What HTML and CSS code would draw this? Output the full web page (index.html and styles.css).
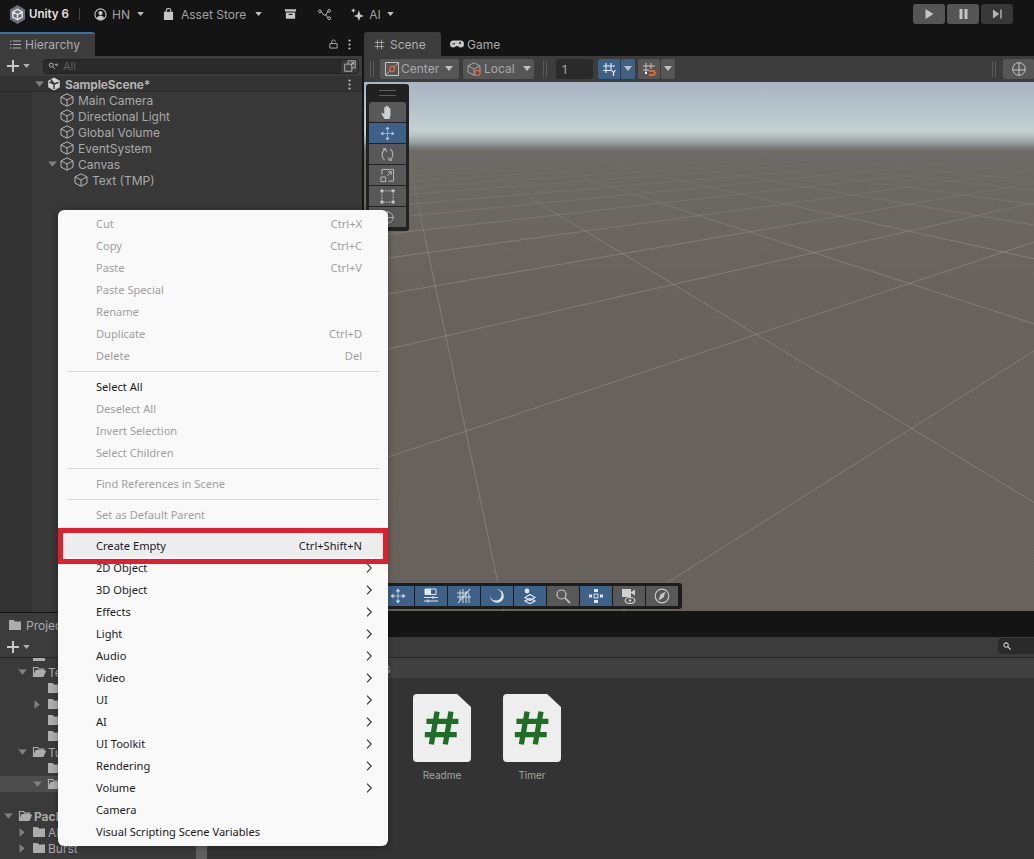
FILE: index.html
```html
<!DOCTYPE html>
<html lang="en">
<head>
<meta charset="utf-8">
<title>Unity 6</title>
<link rel="stylesheet" href="styles.css">
</head>
<body>
<svg class="defs" width="0" height="0" aria-hidden="true">
  <symbol id="cube" viewBox="0 0 14 14"><path d="M7 .8 13 3.900v6.200L7 13.200 1 10.100V3.900Z M1 3.900 7 7l6-3.100 M7 7v6.200" fill="none" stroke="currentColor" stroke-width="1"/></symbol>
  <symbol id="fold" viewBox="0 0 14 12"><path d="M1 1h4.500l1.500 1.600h6V11H1Z" fill="currentColor"/></symbol>
  <symbol id="open" viewBox="0 0 14 12"><path d="M1.500 10.500V1.500h4l1.400 1.600h4.600v1.400H4L1.500 10.500h9.500L13.500 5H4" fill="none" stroke="currentColor" stroke-width="1.200"/><path d="M4 5h9.500L11 10.500H1.500Z" fill="currentColor"/></symbol>
  <symbol id="down" viewBox="0 0 10 6"><path d="M0 0h10L5 6Z" fill="currentColor"/></symbol>
  <symbol id="side" viewBox="0 0 6 10"><path d="M0 0v10l6-5Z" fill="currentColor"/></symbol>
  <symbol id="chev" viewBox="0 0 6 10"><path d="M1 .7 5.200 5 1 9.300" fill="none" stroke="currentColor" stroke-width="1.100"/></symbol>
  <symbol id="move" viewBox="0 0 18 18"><path d="M9 3v12M3 9h12" stroke="currentColor" stroke-width=".8" fill="none"/><path d="M9 .5 11.500 4h-5ZM9 17.500 6.500 14h5ZM.5 9 4 6.500v5ZM17.500 9 14 11.500v-5Z" fill="currentColor"/></symbol>
  <symbol id="hash" viewBox="0 0 44 46"><path d="M16 3 9 43M33 3 26 43M3 15h39M1 31h39" fill="none" stroke="currentColor" stroke-width="6.500"/></symbol>
  <symbol id="grid" viewBox="0 0 16 16"><path d="M5 1v14M11 1v14M1 5h14M1 11h14" fill="none" stroke="currentColor" stroke-width="1.200"/></symbol>
</svg>

<div class="app">
  <header class="topbar">
    <div class="brand">
      <svg class="logo" viewBox="0 0 18 20"><path d="M9 0 17 4.800v10.400L9 20 1 15.200V4.800Z" fill="#6b6f78"/><path d="M9 4.500 14 7.300v5.500L9 15.600 4 12.800V7.300Z M4 7.300 9 10l5-2.700M9 10v5.500" fill="none" stroke="#e4e4e4" stroke-width="1.500"/></svg>
      <span class="brand-name">Unity 6</span>
    </div>
    <span class="top-sep"></span>
    <div class="top-item account">
      <svg class="top-ic" viewBox="0 0 14 14"><circle cx="7" cy="7" r="6" fill="none" stroke="currentColor" stroke-width="1.200"/><circle cx="7" cy="5.500" r="2.300" fill="currentColor"/><path d="M3 11c.8-2 2.200-2.600 4-2.600s3.200.6 4 2.600a6 6 0 0 1-8 0Z" fill="currentColor"/></svg>
      <span>HN</span>
      <svg class="caret" viewBox="0 0 10 6"><use href="#down"/></svg>
    </div>
    <div class="top-item store">
      <svg class="top-ic" viewBox="0 0 12 14"><path d="M1 4h10v9H1Z" fill="currentColor"/><path d="M3.500 5V2.500a2.500 2 0 0 1 5 0V5" fill="none" stroke="currentColor" stroke-width="1.100"/></svg>
      <span>Asset Store</span>
      <svg class="caret" viewBox="0 0 10 6"><use href="#down"/></svg>
    </div>
    <svg class="top-ic archive" viewBox="0 0 14 12"><path d="M1 1h12v2.200H1ZM2 4.500h10V11H2Z" fill="currentColor"/><path d="M5 6.500h4" stroke="#141414" stroke-width="1.200"/></svg>
    <svg class="top-ic graph" viewBox="0 0 14 12"><circle cx="2" cy="2.500" r="1.500" fill="none" stroke="currentColor"/><circle cx="12" cy="2" r="1.500" fill="none" stroke="currentColor"/><circle cx="12" cy="10" r="1.500" fill="none" stroke="currentColor"/><path d="M3.500 3 6 6.500h2.500L10.500 2.500M8.500 6.500l2 3" fill="none" stroke="currentColor"/></svg>
    <div class="top-item ai">
      <svg class="top-ic" viewBox="0 0 14 14"><path d="M8.500 2.500 10 7l4 1.500L10 10l-1.500 4L7 10 3 8.500 7 7Z" fill="currentColor"/><path d="M2.500 0 3.300 2 5 2.700 3.300 3.500 2.500 5.500 1.700 3.500 0 2.700 1.700 2Z" fill="currentColor"/></svg>
      <span>AI</span>
      <svg class="caret" viewBox="0 0 10 6"><use href="#down"/></svg>
    </div>
    <div class="play-group">
      <button class="play-btn"><svg viewBox="0 0 10 12"><path d="M1 1v10l8-5Z" fill="#c4c4c4"/></svg></button>
      <button class="play-btn"><svg viewBox="0 0 10 12"><path d="M1 1h3v10H1ZM6 1h3v10H6Z" fill="#c4c4c4"/></svg></button>
      <button class="play-btn off"><svg viewBox="0 0 12 12"><path d="M1 1v10l7-5Z M9 1h1.500v10H9Z" fill="#b4b4b4"/></svg></button>
    </div>
  </header>

  <div class="workspace">
    <section class="hier">
      <div class="tabrow">
        <div class="tab hier-tab">
          <svg class="tab-ic" viewBox="0 0 11 9"><path d="M3 1h8M3 4.500h8M3 8h8M0 1h1.500M0 4.500h1.500M0 8h1.500" stroke="currentColor" fill="none"/></svg>
          <span>Hierarchy</span>
        </div>
        <div class="tab-tools">
          <svg class="lock" viewBox="0 0 10 11"><path d="M1 5h8v5H1ZM3 5V3a2 2 0 0 1 4 0" fill="none" stroke="currentColor"/></svg>
          <svg class="kebab" viewBox="0 0 3 11"><circle cx="1.500" cy="1.500" r="1.100" fill="currentColor"/><circle cx="1.500" cy="5.500" r="1.100" fill="currentColor"/><circle cx="1.500" cy="9.500" r="1.100" fill="currentColor"/></svg>
        </div>
      </div>
      <div class="hier-tools">
        <div class="plus">
          <svg class="plus-ic" viewBox="0 0 12 12"><path d="M6 0v12M0 6h12" stroke="currentColor" stroke-width="2"/></svg>
          <svg class="plus-caret" viewBox="0 0 10 6"><use href="#down"/></svg>
        </div>
        <div class="search">
          <svg class="mag" viewBox="0 0 11 9"><circle cx="3.500" cy="3.500" r="2.300" fill="none" stroke="currentColor" stroke-width="1.100"/><path d="M5 5l3 3M8 2.500h3L9.500 4.500Z" stroke="currentColor" fill="none"/></svg>
          <span class="search-ph">All</span>
          <span class="search-end"><svg viewBox="0 0 13 13"><path d="M4.500 4.500V.8h7.700v7.700H8.500M.8 4.500h7.700v7.700H.8ZM7 6l3.500-3.500M7.500 2.500h3v3" fill="none" stroke="currentColor"/></svg></span>
        </div>
      </div>
      <div class="hier-body">
        <div class="row scene-row d0">
          <span class="slot"><svg class="tw" viewBox="0 0 10 6"><use href="#down"/></svg></span>
          <svg class="ic" viewBox="0 0 14 14"><path d="M7 .5 12.800 3.800v6.400L7 13.500 1.200 10.200V3.800Z" fill="#d2d2d2"/><path d="M7 7 4 2.600M7 7l4.500-1.500M7 7v5M2.500 5 7 7" stroke="#333" stroke-width="1.400"/></svg>
          <b>SampleScene*</b>
          <svg class="kebab row-kebab" viewBox="0 0 3 11"><circle cx="1.500" cy="1.500" r="1.100" fill="currentColor"/><circle cx="1.500" cy="5.500" r="1.100" fill="currentColor"/><circle cx="1.500" cy="9.500" r="1.100" fill="currentColor"/></svg>
        </div>
        <div class="row d1"><span class="slot"></span><svg class="ic"><use href="#cube"/></svg><span>Main Camera</span></div>
        <div class="row d1"><span class="slot"></span><svg class="ic"><use href="#cube"/></svg><span>Directional Light</span></div>
        <div class="row d1"><span class="slot"></span><svg class="ic"><use href="#cube"/></svg><span>Global Volume</span></div>
        <div class="row d1"><span class="slot"></span><svg class="ic"><use href="#cube"/></svg><span>EventSystem</span></div>
        <div class="row d1"><span class="slot"><svg class="tw" viewBox="0 0 10 6"><use href="#down"/></svg></span><svg class="ic"><use href="#cube"/></svg><span>Canvas</span></div>
        <div class="row d2"><span class="slot"></span><svg class="ic"><use href="#cube"/></svg><span>Text (TMP)</span></div>
      </div>
    </section>

    <section class="scene">
      <div class="tabrow">
        <div class="tab scene-tab"><svg class="tab-ic" viewBox="0 0 16 16"><use href="#grid"/></svg><span>Scene</span></div>
        <div class="tab game-tab">
          <svg class="game-ic" viewBox="0 0 14 8"><path d="M3.500.5h7a3.200 3.200 0 0 1 0 7c-1.500 0-2-1.500-3.500-1.500S5 7.500 3.500 7.500a3.200 3.200 0 0 1 0-7Z" fill="currentColor"/><circle cx="10" cy="3" r="1" fill="#141414"/><path d="M2.500 3.800h2.500" stroke="#141414"/></svg>
          <span>Game</span>
        </div>
      </div>
      <div class="scene-tools">
        <span class="handle"></span>
        <div class="tbtn center-btn">
          <svg class="tool-ic" viewBox="0 0 14 14"><path d="M.5.500h13v13H.5Z" fill="none" stroke="#c4c4c4"/><path d="M1 13 13 1" stroke="#c4c4c4" stroke-width=".8"/><circle cx="7" cy="7" r="2.600" fill="#555" stroke="#e06a3c" stroke-width="1.300"/></svg>
          <span>Center</span>
          <svg class="caret" viewBox="0 0 10 6"><use href="#down"/></svg>
        </div>
        <div class="tbtn local-btn">
          <svg class="tool-ic" viewBox="0 0 14 14"><use href="#cube"/><circle cx="10.500" cy="11" r="2.600" fill="#555" stroke="#e06a3c" stroke-width="1.200"/></svg>
          <span>Local</span>
          <svg class="caret" viewBox="0 0 10 6"><use href="#down"/></svg>
        </div>
        <span class="handle mid"></span>
        <div class="num">1</div>
        <div class="tbtn on grid-btn">
          <svg class="tool-ic" viewBox="0 0 14 14"><path d="M4 1v10M9 1v7M1 4h12M1 8.500h8" fill="none" stroke="#e8eef4" stroke-width="1.100"/><path d="M9.500 8l2 2.500 2-2.500M11.500 10.500V14" fill="none" stroke="#e8eef4" stroke-width="1.200"/></svg>
        </div>
        <div class="tbtn on drop"><svg class="caret" viewBox="0 0 10 6"><use href="#down"/></svg></div>
        <div class="tbtn snap-btn">
          <svg class="tool-ic" viewBox="0 0 14 14"><path d="M4 1v9M9 1v6M1 4h12M1 8h6" fill="none" stroke="#c4c4c4"/><path d="M7 9h4a2 2 0 0 1 0 4H7" fill="none" stroke="#e8622c" stroke-width="1.800"/><path d="M3 10h2v2H3Z" fill="#fff"/></svg>
        </div>
        <div class="tbtn drop"><svg class="caret" viewBox="0 0 10 6"><use href="#down"/></svg></div>
        <span class="fill"></span>
        <span class="handle"></span>
        <div class="tbtn globe-btn">
          <svg class="tool-ic" viewBox="0 0 14 14"><circle cx="7" cy="7" r="6.300" fill="none" stroke="#c8c8c8"/><path d="M7 1v12M1 8h12" fill="none" stroke="#c8c8c8"/></svg>
        </div>
      </div>
      <div class="viewport">
        <svg class="ground" viewBox="364 82 670 529" preserveAspectRatio="none">
          <defs>
            <linearGradient id="fade" gradientUnits="userSpaceOnUse" x1="0" y1="158" x2="0" y2="250">
              <stop offset="0" stop-color="#a8a49f" stop-opacity="0"/>
              <stop offset="1" stop-color="#a8a49f" stop-opacity=".4"/>
            </linearGradient>
          </defs>
          <g class="grid-lines">
            <line x1="400" y1="119" x2="505.500" y2="619"/>
            <line x1="400" y1="119" x2="1226.700" y2="619"/>
            <line x1="400" y1="119" x2="1948" y2="619"/>
            <line x1="400" y1="119" x2="2669" y2="619"/>
            <line x1="400" y1="119" x2="3390" y2="619"/>
            <line x1="400" y1="119" x2="4111" y2="619"/>
            <line x1="400" y1="119" x2="4832" y2="619"/>
            <line x1="400" y1="119" x2="5553" y2="619"/>
            <line x1="400" y1="119" x2="6274" y2="619"/>
            <line x1="388" y1="759" x2="1034" y2="351"/>
            <line x1="388" y1="457" x2="1034" y2="241.900"/>
            <line x1="388" y1="349" x2="1034" y2="202.800"/>
            <line x1="388" y1="294" x2="1034" y2="182.900"/>
            <line x1="388" y1="258" x2="1034" y2="169.900"/>
            <line x1="388" y1="234" x2="1034" y2="161.200"/>
            <line x1="388" y1="218" x2="1034" y2="155.400"/>
            <line x1="388" y1="206" x2="1034" y2="151.100"/>
            <line x1="388" y1="196" x2="1034" y2="147.500"/>
            <line x1="388" y1="189" x2="1034" y2="145"/>
            <line x1="388" y1="182.500" x2="1034" y2="142.600"/>
            <line x1="388" y1="177" x2="1034" y2="140.600"/>
            <line x1="388" y1="173" x2="1034" y2="139.200"/>
          </g>
        </svg>

        <div class="palette">
          <div class="pal-grip"></div>
          <button class="pal-btn first"><svg viewBox="0 0 16 16"><path d="M4.800 15 1.800 9.500c-.5-1 .8-1.700 1.500-.8L4.500 10V3c0-1.200 1.600-1.200 1.700 0v4-5.300c0-1.200 1.700-1.200 1.700 0V7 2.300c0-1.200 1.700-1.200 1.700 0V7.500 4c0-1.100 1.600-1.100 1.600 0v7l-1 4Z" fill="#cfcfcf"/></svg></button>
          <button class="pal-btn on"><svg viewBox="0 0 18 18"><use href="#move"/></svg></button>
          <button class="pal-btn"><svg viewBox="0 0 16 16"><path d="M5 14C1.500 11 1 6 5 2.500M11 2c3.500 3 4 8 0 11.500M3 2h3l1 3M13 14h-3l-1-3" fill="none" stroke="#b8b8b8" stroke-width="1.100"/></svg></button>
          <button class="pal-btn"><svg viewBox="0 0 16 16"><path d="M2 7V1.500h12.500v12.500H9M1 9.500h5v5H1ZM7.500 8.500 12 4M8.500 4H12v3.500" fill="none" stroke="#c0c0c0"/></svg></button>
          <button class="pal-btn"><svg viewBox="0 0 16 16"><path d="M2 2h12v12H2Z" fill="none" stroke="#c0c0c0" stroke-dasharray="2 1"/><path d="M.5.500h3v3h-3ZM12.500.500h3v3h-3ZM.5 12.500h3v3h-3ZM12.500 12.500h3v3h-3Z" fill="#c8c8c8"/></svg></button>
          <button class="pal-btn"><svg viewBox="0 0 16 16"><circle cx="8" cy="8" r="6" fill="none" stroke="#b8b8b8"/><path d="M8 1v14M1 8h14" stroke="#b8b8b8" fill="none"/></svg></button>
        </div>

        <div class="overlay-bar">
          <button class="ov-btn on"><svg viewBox="0 0 18 18"><use href="#move"/></svg></button>
          <button class="ov-btn on"><svg viewBox="0 0 16 16"><path d="M2 1h11v5.500H2Z" fill="none" stroke="#dfe6ee"/><path d="M2 1h6v5.500H2Z" fill="#dfe6ee"/><path d="M1 9.500h14M1 13h14M10 8v3M5 11.500v3" stroke="#dfe6ee" fill="none"/></svg></button>
          <button class="ov-btn on"><svg viewBox="0 0 16 16"><path d="M4 2v10M7 1v14M10 3v12M13 6v9M1 5h12M1 9h14" stroke="#dfe6ee" fill="none" stroke-width=".9"/><path d="M2 15 14 1" stroke="#dfe6ee" stroke-width="1.100"/></svg></button>
          <button class="ov-btn on"><svg viewBox="0 0 16 16"><circle cx="8" cy="8" r="6.800" fill="#dfe6ee"/><circle cx="6.800" cy="6.800" r="5.800" fill="#3e6187"/></svg></button>
          <button class="ov-btn on"><svg viewBox="0 0 16 16"><circle cx="5" cy="3" r="2.400" fill="#dfe6ee"/><path d="M8 6.500 13 9.500 8 12.500 3 9.500Z M8 10.500 13 13 8 15.700 3 13Z" fill="none" stroke="#dfe6ee" stroke-width="1.200"/></svg></button>
          <button class="ov-btn"><svg viewBox="0 0 16 16"><circle cx="6.500" cy="6.500" r="4.500" fill="none" stroke="#c8c8c8" stroke-width="1.200"/><path d="M10 10l5 5" stroke="#c8c8c8" stroke-width="1.600"/></svg></button>
          <button class="ov-btn on"><svg viewBox="0 0 16 16"><path d="M6 6h4v4H6Z" fill="none" stroke="#dfe6ee"/><path d="M6 1h4v3H6ZM6 12h4v3H6ZM1 6.500h3v3H1ZM12 6.500h3v3h-3Z" fill="#dfe6ee"/></svg></button>
          <button class="ov-btn"><svg viewBox="0 0 16 16"><path d="M1 1h9v8H1ZM10 4l4-2.500v6L10 5Z" fill="#d0d0d0"/><ellipse cx="9" cy="12.500" rx="4.800" ry="3" fill="#555" stroke="#d0d0d0" stroke-width="1.200"/><circle cx="9" cy="12.500" r="1.300" fill="#d0d0d0"/></svg></button>
          <button class="ov-btn"><svg viewBox="0 0 16 16"><circle cx="8" cy="8" r="6.800" fill="none" stroke="#c8c8c8" stroke-width="1.200"/><path d="M11.500 3.500 9.500 9.500 4.500 12.500 6.500 6.500Z" fill="#c8c8c8"/></svg></button>
        </div>
      </div>
    </section>
  </div>

  <section class="project">
    <div class="proj-tabs">
      <div class="tab proj-tab"><svg class="ic-f"><use href="#fold"/></svg><span>Project</span></div>
    </div>
    <div class="proj-tools">
      <div class="plus">
        <svg class="plus-ic" viewBox="0 0 12 12"><path d="M6 0v12M0 6h12" stroke="currentColor" stroke-width="2"/></svg>
        <svg class="plus-caret" viewBox="0 0 10 6"><use href="#down"/></svg>
      </div>
      <div class="proj-search"><svg viewBox="0 0 9 9"><circle cx="3.500" cy="3.500" r="2.500" fill="none" stroke="#d0d0d0" stroke-width="1.200"/><path d="M5.500 5.500l3 3" stroke="#d0d0d0" stroke-width="1.400"/></svg></div>
    </div>
    <div class="proj-body">
      <div class="tree">
        <div class="trow t1 clipped"><span class="slot"></span><svg class="ic-f"><use href="#fold"/></svg></div>
        <div class="trow t1"><span class="slot"><svg class="tw" viewBox="0 0 10 6"><use href="#down"/></svg></span><svg class="ic-f"><use href="#open"/></svg><span>Te</span></div>
        <div class="trow t2"><span class="slot"></span><svg class="ic-f"><use href="#fold"/></svg></div>
        <div class="trow t2"><span class="slot"><svg class="ts" viewBox="0 0 6 10"><use href="#side"/></svg></span><svg class="ic-f"><use href="#fold"/></svg></div>
        <div class="trow t2"><span class="slot"></span><svg class="ic-f"><use href="#fold"/></svg></div>
        <div class="trow t2"><span class="slot"></span><svg class="ic-f"><use href="#fold"/></svg></div>
        <div class="trow t1"><span class="slot"><svg class="tw" viewBox="0 0 10 6"><use href="#down"/></svg></span><svg class="ic-f"><use href="#open"/></svg><span>Tu</span></div>
        <div class="trow t2"><span class="slot"></span><svg class="ic-f"><use href="#fold"/></svg></div>
        <div class="trow t2 sel"><span class="slot"><svg class="tw" viewBox="0 0 10 6"><use href="#down"/></svg></span><svg class="ic-f"><use href="#open"/></svg></div>
        <div class="trow t-gap"></div>
        <div class="trow t0 bold"><span class="slot"><svg class="tw" viewBox="0 0 10 6"><use href="#down"/></svg></span><svg class="ic-f"><use href="#open"/></svg><span>Pack</span></div>
        <div class="trow t1"><span class="slot"><svg class="ts" viewBox="0 0 6 10"><use href="#side"/></svg></span><svg class="ic-f"><use href="#fold"/></svg><span>Al</span></div>
        <div class="trow t1"><span class="slot"><svg class="ts" viewBox="0 0 6 10"><use href="#side"/></svg></span><svg class="ic-f"><use href="#fold"/></svg><span>Burst</span></div>
      </div>
      <div class="scrollbar"><span class="thumb"></span></div>
      <div class="assets">
        <div class="crumbs"><span>Scripts</span></div>
        <div class="asset-grid">
          <figure class="asset">
            <div class="file"><svg viewBox="0 0 44 46"><use href="#hash"/></svg></div>
            <figcaption>Readme</figcaption>
          </figure>
          <figure class="asset">
            <div class="file"><svg viewBox="0 0 44 46"><use href="#hash"/></svg></div>
            <figcaption>Timer</figcaption>
          </figure>
        </div>
      </div>
    </div>
  </section>

  <div class="menu">
    <div class="mi dis"><span>Cut</span><kbd>Ctrl+X</kbd></div>
    <div class="mi dis"><span>Copy</span><kbd>Ctrl+C</kbd></div>
    <div class="mi dis"><span>Paste</span><kbd>Ctrl+V</kbd></div>
    <div class="mi dis"><span>Paste Special</span></div>
    <div class="mi dis"><span>Rename</span></div>
    <div class="mi dis"><span>Duplicate</span><kbd>Ctrl+D</kbd></div>
    <div class="mi dis"><span>Delete</span><kbd>Del</kbd></div>
    <hr>
    <div class="mi"><span>Select All</span></div>
    <div class="mi dis"><span>Deselect All</span></div>
    <div class="mi dis"><span>Invert Selection</span></div>
    <div class="mi dis"><span>Select Children</span></div>
    <hr>
    <div class="mi dis"><span>Find References in Scene</span></div>
    <hr>
    <div class="mi dis"><span>Set as Default Parent</span></div>
    <hr>
    <div class="mi hot"><span>Create Empty</span><kbd>Ctrl+Shift+N</kbd></div>
    <div class="mi"><span>2D Object</span><svg class="chev"><use href="#chev"/></svg></div>
    <div class="mi"><span>3D Object</span><svg class="chev"><use href="#chev"/></svg></div>
    <div class="mi"><span>Effects</span><svg class="chev"><use href="#chev"/></svg></div>
    <div class="mi"><span>Light</span><svg class="chev"><use href="#chev"/></svg></div>
    <div class="mi"><span>Audio</span><svg class="chev"><use href="#chev"/></svg></div>
    <div class="mi"><span>Video</span><svg class="chev"><use href="#chev"/></svg></div>
    <div class="mi"><span>UI</span><svg class="chev"><use href="#chev"/></svg></div>
    <div class="mi"><span>AI</span><svg class="chev"><use href="#chev"/></svg></div>
    <div class="mi"><span>UI Toolkit</span><svg class="chev"><use href="#chev"/></svg></div>
    <div class="mi"><span>Rendering</span><svg class="chev"><use href="#chev"/></svg></div>
    <div class="mi"><span>Volume</span><svg class="chev"><use href="#chev"/></svg></div>
    <div class="mi"><span>Camera</span></div>
    <div class="mi"><span>Visual Scripting Scene Variables</span></div>
  </div>
  <div class="red-box"></div>
</div>
</body>
</html>
```

FILE: styles.css
```css
* { box-sizing: border-box; }
html, body { margin: 0; padding: 0; background: #141414; }
.defs { position: absolute; }
button { border: 0; padding: 0; font: inherit; }
figure { margin: 0; }

.app {
  position: relative;
  width: 1034px;
  height: 859px;
  overflow: hidden;
  display: flex;
  flex-direction: column;
  background: #141414;
  font-family: Inter, "Liberation Sans", sans-serif;
  font-size: 12px;
  color: #a9a9a9;
}

/* top bar */
.topbar { height: 32px; flex: none; display: flex; align-items: center; padding-bottom: 4px; color: #a2a2a2; }
.brand { display: flex; align-items: center; width: 79px; padding-left: 9px; gap: 3px; }
.logo { width: 17px; height: 19px; flex: none; }
.brand-name { color: #e4e4e4; font-weight: 600; font-size: 11.5px; white-space: nowrap; }
.top-sep { width: 1px; height: 12px; background: #444; flex: none; }
.top-item { display: flex; align-items: center; gap: 6px; flex: none; white-space: nowrap; }
.top-ic { width: 13px; height: 13px; color: #c6c6c6; flex: none; }
.caret { width: 7px; height: 4px; color: #c0c0c0; flex: none; }
.account { margin-left: 14px; gap: 5px; }
.account .caret { margin-left: 2px; }
.store { margin-left: 19px; gap: 7px; }
.store .top-ic { width: 11px; height: 13px; }
.store .caret { margin-left: 2px; }
.archive { margin-left: 22px; width: 13px; height: 12px; }
.graph { margin-left: 21px; }
.ai { margin-left: 20px; gap: 5px; }
.ai .caret { margin-left: 1px; }
.play-group { margin-left: auto; margin-right: 21px; display: flex; gap: 2px; }
.play-btn { width: 32px; height: 20px; background: #555; border-radius: 3px; display: flex; align-items: center; justify-content: center; }
.play-btn svg { width: 11px; height: 12px; }
.play-btn.off { background: #383838; }

/* panels */
.workspace { height: 580px; flex: none; display: flex; gap: 2px; }
.hier { width: 362px; flex: none; display: flex; flex-direction: column; }
.scene { flex: 1; min-width: 0; display: flex; flex-direction: column; }
.tabrow { height: 24px; flex: none; display: flex; align-items: stretch; }
.tab { display: flex; align-items: center; color: #ababab; white-space: nowrap; }
.tab-ic { width: 11px; height: 11px; flex: none; color: #b4b4b4; }
.hier-tab { width: 95px; background: #3c3c3c; border-top: 2px solid #3a72a8; border-top-right-radius: 3px; padding-left: 10px; gap: 4px; padding-bottom: 1px; }
.hier-tab .tab-ic { height: 9px; width: 11px; }
.tab-tools { margin-left: auto; display: flex; align-items: center; color: #b8b8b8; padding-right: 11px; gap: 10px; }
.lock { width: 9px; height: 10px; }
.kebab { width: 3px; height: 11px; color: #c0c0c0; flex: none; }

.hier-tools { height: 20px; flex: none; background: #3c3c3c; display: flex; align-items: center; }
.plus { width: 43px; flex: none; display: flex; align-items: center; padding-left: 7px; gap: 4px; color: #c8c8c8; }
.plus-ic { width: 12px; height: 12px; }
.plus-caret { width: 7px; height: 4px; color: #b0b0b0; }
.search { width: 316px; height: 15px; background: #2a2a2a; border: 1px solid #222; border-radius: 4px; display: flex; align-items: center; padding-left: 4px; }
.mag { width: 10px; height: 8px; color: #b0b0b0; flex: none; }
.search-ph { margin-left: 5px; font-size: 11px; color: #5f5f5f; }
.search-end { margin-left: auto; width: 18px; height: 13px; border-left: 1px solid #222; display: flex; align-items: center; justify-content: center; background: #3a3a3a; border-radius: 0 3px 3px 0; }
.search-end svg { width: 12px; height: 12px; color: #b8b8b8; }

.hier-body { flex: 1; background: linear-gradient(to right, #333 32px, #383838 32px); }
.row { height: 16px; display: flex; align-items: center; white-space: nowrap; color: #a9a9a9; }
.scene-row { background: #333; box-shadow: inset 0 -1px #2c2c2c; position: relative; font-weight: 600; padding-right: 11px; }
.scene-row b { font-weight: 700; color: #b2b2b2; letter-spacing: -.15px; }
.row-kebab { margin-left: auto; }
.slot { width: 14px; height: 16px; flex: none; display: flex; align-items: center; justify-content: center; }
.tw { width: 9px; height: 6px; color: #808080; }
.ts { width: 6px; height: 9px; color: #808080; }
.ic { width: 14px; height: 14px; flex: none; margin: 0 4px 0 1px; color: #b6b6b6; }
.d0 { padding-left: 32px; }
.d1 { padding-left: 45px; }
.d2 { padding-left: 59px; }

/* scene */
.scene-tab { width: 77px; background: #3c3c3c; border-radius: 3px 3px 0 0; padding-left: 10px; gap: 5px; }
.game-tab { padding-left: 9px; gap: 3px; }
.game-ic { width: 14px; height: 8px; color: #c8c8c8; }
.scene-tools { height: 26px; flex: none; background: #3c3c3c; display: flex; align-items: center; padding-left: 6px; padding-bottom: 1px; }
.handle { width: 4px; height: 16px; border-left: 1px solid #5a5a5a; border-right: 1px solid #5a5a5a; flex: none; }
.handle.mid { margin-left: 9px; }
.fill { flex: 1; }
.tbtn { height: 20px; background: #565656; border-radius: 2px; display: flex; align-items: center; color: #a8a8a8; flex: none; }
.tbtn.on { background: #3e6187; }
.tool-ic { width: 14px; height: 14px; flex: none; }
.center-btn { width: 79px; margin-left: 6px; padding-left: 5px; gap: 2px; }
.center-btn .caret { margin-left: 4px; }
.local-btn .caret { margin-left: 5px; }
.local-btn { width: 71px; margin-left: 4px; padding-left: 4px; gap: 3px; }
.tbtn .caret { width: 8px; height: 5px; }
.num { width: 37px; height: 20px; margin-left: 9px; background: #2a2a2a; border-radius: 3px; color: #a8a8a8; padding: 3px 0 0 6px; flex: none; }
.grid-btn { width: 22px; margin-left: 5px; justify-content: center; border-radius: 2px 0 0 2px; }
.drop { width: 14px; margin-left: 1px; justify-content: center; }
.snap-btn { width: 22px; margin-left: 3px; justify-content: center; }
.globe-btn { width: 31px; margin-left: 7px; justify-content: center; }

.viewport {
  position: relative;
  flex: 1;
  margin-bottom: 1px;
  overflow: hidden;
  background: linear-gradient(to bottom, #a7b6c3 0, #b4c2ca 25px, #c4d0d2 48px, #b6c1c2 54px, #959d9e 61px, #7d7f7e 65px, #6e6b68 69px, #6c6864 90px, #68635d 200px, #67625c 100%);
}
.ground { position: absolute; inset: 0; width: 100%; height: 100%; }
.grid-lines line { stroke: url(#fade); stroke-width: 1; }

.palette { position: absolute; left: 2px; top: 2px; width: 43px; height: 147px; background: #212121; border-radius: 3px; padding: 0 3px; }
.pal-grip { height: 18px; margin: 0 8px; position: relative; }
.pal-grip::before { content: ""; position: absolute; left: 2px; right: 2px; top: 6px; height: 4px; border-top: 1px solid #5e5e5e; border-bottom: 1px solid #5e5e5e; }
.pal-btn { display: flex; width: 37px; height: 20px; margin-bottom: 1px; background: #585858; align-items: center; justify-content: center; }
.pal-btn.first { border-radius: 3px 3px 0 0; }
.pal-btn.on { background: #3e6187; color: #a9cdf0; }
.pal-btn svg { width: 15px; height: 15px; }

.overlay-bar { position: absolute; left: 15px; bottom: 2px; width: 303px; height: 26px; background: #1c1c1c; border-radius: 3px; display: flex; align-items: center; padding-left: 3px; gap: 1px; }
.ov-btn { width: 32px; height: 20px; flex: none; background: #585858; display: flex; align-items: center; justify-content: center; }
.ov-btn.on { background: #3e6187; color: #cfe0f0; }
.ov-btn svg { width: 16px; height: 16px; }

/* project */
.project { flex: 1; min-height: 0; display: flex; flex-direction: column; }
.proj-tabs { height: 25px; flex: none; padding-top: 1px; display: flex; }
.proj-tab { width: 90px; background: #3c3c3c; padding-left: 8px; gap: 4px; border-radius: 0 3px 0 0; }
.ic-f { width: 14px; height: 12px; flex: none; color: #adadad; }
.proj-tools { height: 21px; flex: none; background: #3c3c3c; border-bottom: 1px solid #262626; display: flex; align-items: center; justify-content: space-between; padding-top: 0; }
.proj-tools .plus { padding-top: 0; }
.proj-search { width: 36px; height: 16px; margin-bottom: 2px; background: #2a2a2a; border-radius: 4px 0 0 4px; padding: 4px 0 0 5px; }
.proj-search svg { width: 8px; height: 8px; display: block; }
.proj-body { flex: 1; min-height: 0; display: flex; }
.tree { width: 196px; flex: none; background: #3a3a3a; overflow: hidden; }
.trow { height: 16px; display: flex; align-items: center; white-space: nowrap; color: #a9a9a9; }
.trow .ic-f { margin: 0 2px 0 3px; }
.trow.clipped { margin-top: -10px; }
.t0 { padding-left: 1px; }
.t1 { padding-left: 15px; }
.t2 { padding-left: 30px; }
.sel { background: #4d4d4d; }
.bold { font-weight: 700; }
.scrollbar { width: 11px; flex: none; background: #2e2e2e; position: relative; display: flex; align-items: flex-end; }
.thumb { display: block; width: 100%; height: 200px; background: #5f5f5f; }
.assets { flex: 1; min-width: 0; background: #333; display: flex; flex-direction: column; }
.crumbs { height: 20px; flex: none; background: #414141; padding: 3px 0 0 144px; color: #a9a9a9; white-space: nowrap; }
.asset-grid { display: flex; padding: 16px 0 0 205px; gap: 30px; }
.asset { width: 60px; display: flex; flex-direction: column; align-items: center; }
.file { width: 58px; height: 68px; background: #eeeeee; border-radius: 4px; clip-path: polygon(0 0, 76% 0, 100% 19%, 100% 100%, 0 100%); display: flex; align-items: center; justify-content: center; color: #1f6d27; }
.file svg { width: 36px; height: 42px; }
.asset figcaption { margin-top: 7px; font-size: 10px; color: #a4a4a4; }

/* context menu */
.menu {
  position: absolute;
  left: 58px;
  top: 210px;
  width: 330px;
  height: 636px;
  background: #f9f9f9;
  border-radius: 6px;
  padding: 3px 0;
  box-shadow: 0 1px 6px rgba(0, 0, 0, .35);
  font-family: "Noto Sans", sans-serif;
  font-size: 11.1px;
  color: #1b1b1b;
}
.mi { height: 22px; display: flex; align-items: center; justify-content: space-between; padding: 0 26px 2px 38px; white-space: nowrap; position: relative; }
.mi.dis { color: #a0a0a0; }
.mi.hot { background: #ededed; }
.mi kbd { font: inherit; }
.chev { width: 6px; height: 10px; color: #333; position: absolute; right: 16px; top: 6px; }
.menu hr { height: 1px; border: 0; margin: 4px 9px; background: #d8d8d8; }
.red-box { position: absolute; left: 58px; top: 528px; width: 330px; height: 36px; border: 5px solid #e41f2d; pointer-events: none; }
```
